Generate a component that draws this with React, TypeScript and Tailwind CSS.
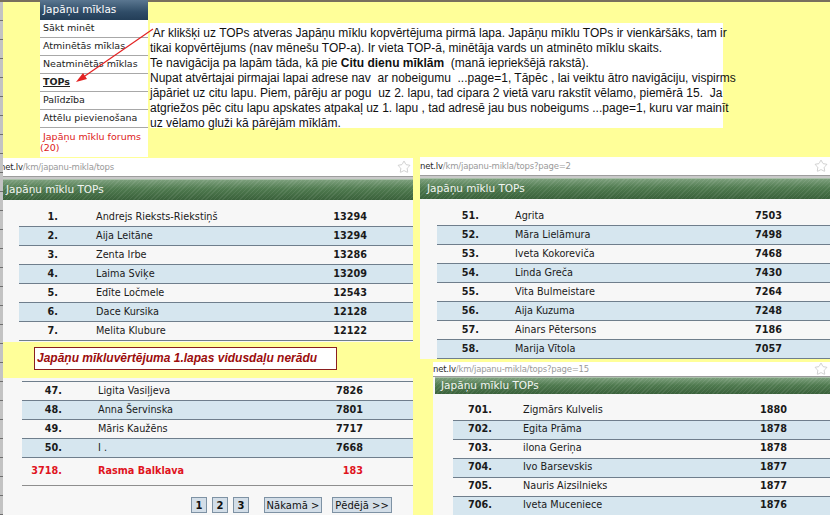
import { Star } from "lucide-react";

type Entry = [string, string, string];

const page1: Entry[] = [
  ["1.", "Andrejs Rieksts-Riekstiņš", "13294"],
  ["2.", "Aija Leitāne", "13294"],
  ["3.", "Zenta Irbe", "13286"],
  ["4.", "Laima Sviķe", "13209"],
  ["5.", "Edīte Ločmele", "12543"],
  ["6.", "Dace Kursika", "12128"],
  ["7.", "Melita Klubure", "12122"],
];

const page2: Entry[] = [
  ["51.", "Agrita", "7503"],
  ["52.", "Māra Lielāmura", "7498"],
  ["53.", "Iveta Kokoreviča", "7468"],
  ["54.", "Linda Greča", "7430"],
  ["55.", "Vita Bulmeistare", "7264"],
  ["56.", "Aija Kuzuma", "7248"],
  ["57.", "Ainars Pētersons", "7186"],
  ["58.", "Marija Vītola", "7057"],
];

const page1end: Entry[] = [
  ["47.", "Ligita Vasiļjeva", "7826"],
  ["48.", "Anna Šervinska", "7801"],
  ["49.", "Māris Kaužēns", "7717"],
  ["50.", "I .", "7668"],
];

const page15: Entry[] = [
  ["701.", "Zigmārs Kulvelis", "1880"],
  ["702.", "Egita Prāma", "1878"],
  ["703.", "ilona Geriņa", "1878"],
  ["704.", "Ivo Barsevskis", "1877"],
  ["705.", "Nauris Aizsilnieks", "1877"],
  ["706.", "Iveta Muceniece", "1876"],
];

const menu = ["Sākt minēt", "Atminētās mīklas", "Neatminētās mīklas", "TOPs", "Palīdzība", "Attēlu pievienošana"];

const note = [
  " Ar klikšķi uz TOPs atveras Japāņu mīklu kopvērtējuma pirmā lapa. Japāņu mīklu TOPs ir vienkāršāks, tam ir",
  "tikai kopvērtējums (nav mēnešu TOP-a). Ir vieta TOP-ā, minētāja vards un atminēto mīklu skaits.",
  null,
  "Nupat atvērtajai pirmajai lapai adrese nav  ar nobeigumu  ...page=1, Tāpēc , lai veiktu ātro navigāciju, vispirms",
  "jāpāriet uz citu lapu. Piem, pārēju ar pogu  uz 2. lapu, tad cipara 2 vietā varu rakstīt vēlamo, piemērā 15.  Ja",
  "atgriežos pēc citu lapu apskates atpakaļ uz 1. lapu , tad adresē jau bus nobeigums ...page=1, kuru var mainīt",
  "uz vēlamo gluži kā pārējām mīklām.",
];

// rank / name / score columns, offsets differ per screenshot
type Cols = { rank: string; name: string; score: string };

function Rows({ rows, cols }: { rows: Entry[]; cols: Cols }) {
  return (
    <div className="flex flex-col">
      {rows.map(([rank, name, score], i) => (
        <div
          key={rank}
          className={`flex h-[19px] items-center border-b border-[#6f7e8c] text-[9.7px] text-[#1a1a1a] ${
            i % 2 === 1 ? "bg-[#d6e6ef]" : "bg-[#f7f7f7]"
          }`}
        >
          <span className={`text-right font-bold ${cols.rank}`}>{rank}</span>
          <span className={`flex-1 ${cols.name}`}>{name}</span>
          <span className={`text-right font-bold ${cols.score}`}>{score}</span>
        </div>
      ))}
    </div>
  );
}

function Shot({ url, className, headerPad, children }: { url: string; className: string; headerPad: string; children: React.ReactNode }) {
  return (
    <div className={`absolute flex flex-col overflow-hidden bg-[#f7f7f7] font-['DejaVu_Sans',sans-serif] ${className}`}>
      <div className="flex h-[18px] items-center justify-between bg-white pr-[2px]">
        <span className="text-[8.5px] tracking-[-0.2px]">
          <span className="text-[#2a2a2a]">net.lv</span>
          <span className="text-[#9a9a9a]">{url}</span>
        </span>
        <Star size={14} strokeWidth={1} className="text-[#b0b0b0]" />
      </div>
      <div className="h-[3px] border-t border-[#9d9d9d] bg-[#c9c9c9]" />
      <div
        className={`flex h-[21px] items-center border-t border-[#a9c0a9] bg-[repeating-linear-gradient(135deg,rgba(255,255,255,0.08)_0_1px,transparent_1px_3px),linear-gradient(to_bottom,#7c9f7c,#4f7a4f_45%,#3a613b)] text-[10.5px] text-[#f2f5f2] ${headerPad}`}
      >
        Japāņu mīklu TOPs
      </div>
      {children}
    </div>
  );
}

export default function App() {
  return (
    <div className="relative h-[515px] w-[830px] overflow-hidden bg-[#ffff99]">
      <div className="absolute left-0 right-0 top-0 h-[2px] bg-[#78705e]" />

      {/* left menu */}
      <div className="absolute left-[40px] top-0 w-[108px] font-['DejaVu_Sans',sans-serif] text-[9.5px]">
        <div className="flex h-[20px] items-center bg-[linear-gradient(to_bottom,#5a7690,#2f4c67_60%,#233e58)] pl-[3px] text-[10.5px] text-white">
          Japāņu mīklas
        </div>
        {menu.map((m) => (
          <div key={m} className="flex h-[18px] items-center border-b border-[#a8a8a8] bg-white pl-[3px] text-[#222]">
            <span className={m === "TOPs" ? "font-bold underline" : ""}>{m}</span>
          </div>
        ))}
        <div className="bg-white pb-[4px] pt-[3px] leading-[11px] text-[#dd1a1a]">
          <div className="pl-[3px]">Japāņu mīklu forums</div>
          <div>(20)</div>
        </div>
      </div>

      {/* explanation text */}
      <div className="absolute left-[150px] top-[23px] h-[105px] w-[573px] bg-white pt-[3px] font-['Liberation_Sans',Arial,sans-serif] text-[12px] leading-[15px] text-[#111]">
        {note.map((line, i) =>
          line === null ? (
            <div key={i} className="whitespace-pre">
              Te navigācija pa lapām tāda, kā pie <b>Citu dienu mīklām</b>  (manā iepriekšējā rakstā).
            </div>
          ) : (
            <div key={i} className="whitespace-pre">
              {line}
            </div>
          )
        )}
      </div>

      {/* red arrow */}
      <svg className="absolute left-0 top-0" width="170" height="100" viewBox="0 0 170 100">
        <line x1="153" y1="29" x2="82" y2="78" stroke="#e32222" strokeWidth="1.2" />
        <polygon points="76,82 83,73 87,79" fill="#e32222" />
      </svg>

      {/* page 1 */}
      <Shot url="/km/japanu-mikla/tops" className="left-0 top-[158px] h-[184px] w-[413px]" headerPad="pl-[6px]">
        <div className="pl-[19px] pt-[8px]">
          <Rows rows={page1} cols={{ rank: "w-[39px]", name: "ml-[38px]", score: "pr-[46px]" }} />
        </div>
      </Shot>

      {/* page 2 */}
      <Shot url="/km/japanu-mikla/tops?page=2" className="left-[420px] top-[157px] h-[202px] w-[410px]" headerPad="pl-[7px]">
        <div className="pl-[17px] pt-[8px]">
          <Rows rows={page2} cols={{ rank: "w-[42px]", name: "ml-[36px]", score: "pr-[48px]" }} />
        </div>
      </Shot>

      {/* remark */}
      <div className="absolute left-[34px] top-[347px] h-[23px] w-[303px] border border-[#8a1f1f] bg-white pl-[2px] pt-[1px] font-['Liberation_Sans',Arial,sans-serif] text-[12px] font-bold italic text-[#9c0d0d]">
        Japāņu mīkluvērtējuma 1.lapas vidusdaļu nerādu
      </div>

      {/* end of page 1 */}
      <div className="absolute left-0 top-[378px] h-[137px] w-[413px] bg-[#f7f7f7] pt-[3px] font-['DejaVu_Sans',sans-serif]">
        <div className="ml-[22px] border-t border-[#6f7e8c]">
          <Rows rows={page1end} cols={{ rank: "w-[40px]", name: "ml-[36px]", score: "pr-[50px]" }} />
          <div className="flex h-[28px] items-center border-b border-[#8e8e8e] text-[9.7px] font-bold text-[#e0141e]">
            <span className="w-[40px] text-right">3718.</span>
            <span className="ml-[36px] flex-1">Rasma Balklava</span>
            <span className="pr-[50px] text-right">183</span>
          </div>
        </div>
        <div className="mt-[11px] flex pl-[191px] text-[10px] text-[#111]">
          {["1", "2", "3"].map((n) => (
            <span key={n} className="mr-[5px] flex h-[16px] w-[16px] items-center justify-center border border-[#7e92a4] bg-[#d3dee8] font-bold">
              {n}
            </span>
          ))}
          <span className="ml-[10px] flex h-[16px] w-[58px] items-center justify-center border border-[#7e92a4] bg-[#d3dee8]">
            Nākamā &gt;
          </span>
          <span className="ml-[10px] flex h-[16px] w-[60px] items-center justify-center border border-[#7e92a4] bg-[#d3dee8]">
            Pēdējā &gt;&gt;
          </span>
        </div>
      </div>

      {/* page 15 */}
      <Shot url="/km/japanu-mikla/tops?page=15" className="left-[433px] top-[362px] h-[153px] w-[397px]" headerPad="ml-[2px] pl-[6px]">
        <div className="pl-[20px] pt-[8px]">
          <Rows rows={page15} cols={{ rank: "w-[39px]", name: "ml-[31px]", score: "pr-[43px]" }} />
        </div>
      </Shot>

      {/* cut edge of a sheet at the left */}
      <div className="absolute bottom-0 left-0 top-[2px] w-[3px] bg-[repeating-linear-gradient(to_bottom,#c3c3c3_0_18px,#6e6e6e_18px_19px)]" />
    </div>
  );
}
